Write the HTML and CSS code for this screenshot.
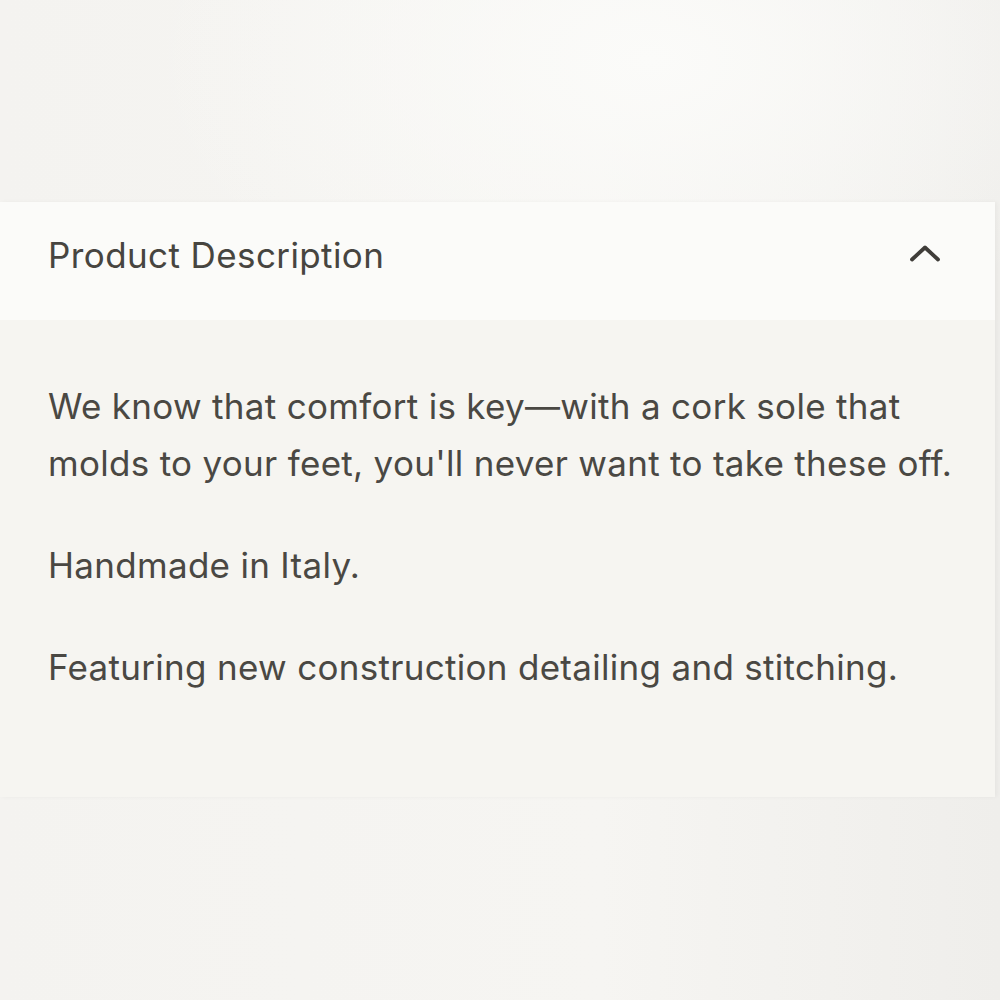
FILE: index.html
```html
<!DOCTYPE html>
<html lang="en">
<head>
<meta charset="utf-8">
<title>Product Description</title>
<link rel="stylesheet" href="styles.css">
</head>
<body>
<div class="page">
  <div class="top-space"></div>
  <section class="accordion">
    <header class="acc-head">
      <h2 class="acc-title">Product Description</h2>
      <svg class="chevron" width="32" height="20" viewBox="0 0 32 20" aria-hidden="true">
        <path d="M3 15.5 L16 3.5 L29 15.5" fill="none" stroke="#3f3d39" stroke-width="3.8" stroke-linecap="round" stroke-linejoin="round"/>
      </svg>
    </header>
    <div class="acc-body">
      <p>We know that comfort is key—with a cork sole that molds to your feet, you'll never want to take these off.</p>
      <p>Handmade in Italy.</p>
      <p>Featuring new construction detailing and stitching.</p>
    </div>
  </section>
</div>
</body>
</html>
```

FILE: styles.css
```css
html, body {
  margin: 0;
  padding: 0;
}
body {
  width: 1000px;
  height: 1000px;
  overflow: hidden;
  background: radial-gradient(ellipse 500px 300px at 650px 60px, #fbfbf9 0%, rgba(251,251,249,0) 100%),
              linear-gradient(to right, #f4f3f0 0%, #f6f5f2 60%, #efeeeb 100%);
  font-family: Inter, "Liberation Sans", sans-serif;
  color: #4a4843;
}
.page {
  display: flex;
  flex-direction: column;
}
.top-space {
  height: 202px;
}
.accordion {
  width: 995px;
  box-shadow: 2px 0 4px rgba(0,0,0,0.04);
}
.acc-head {
  height: 118px;
  background: #fbfbf9;
  display: flex;
  align-items: center;
  justify-content: space-between;
  padding: 0 54px 12px 48px;
  box-sizing: border-box;
}
.acc-title {
  margin: 0;
  font-weight: 400;
  font-size: 35px;
  letter-spacing: 0.4px;
  line-height: 40px;
  color: #474540;
}
.chevron {
  display: block;
  margin-top: -2px;
}
.acc-body {
  background: #f6f5f1;
  height: 477px;
  box-sizing: border-box;
  padding: 58px 28px 0 48px;
}
.acc-body p {
  margin: 0 0 45px 0;
  font-size: 35px;
  letter-spacing: 0.3px;
  line-height: 57px;
  color: #4a4843;
}
```
